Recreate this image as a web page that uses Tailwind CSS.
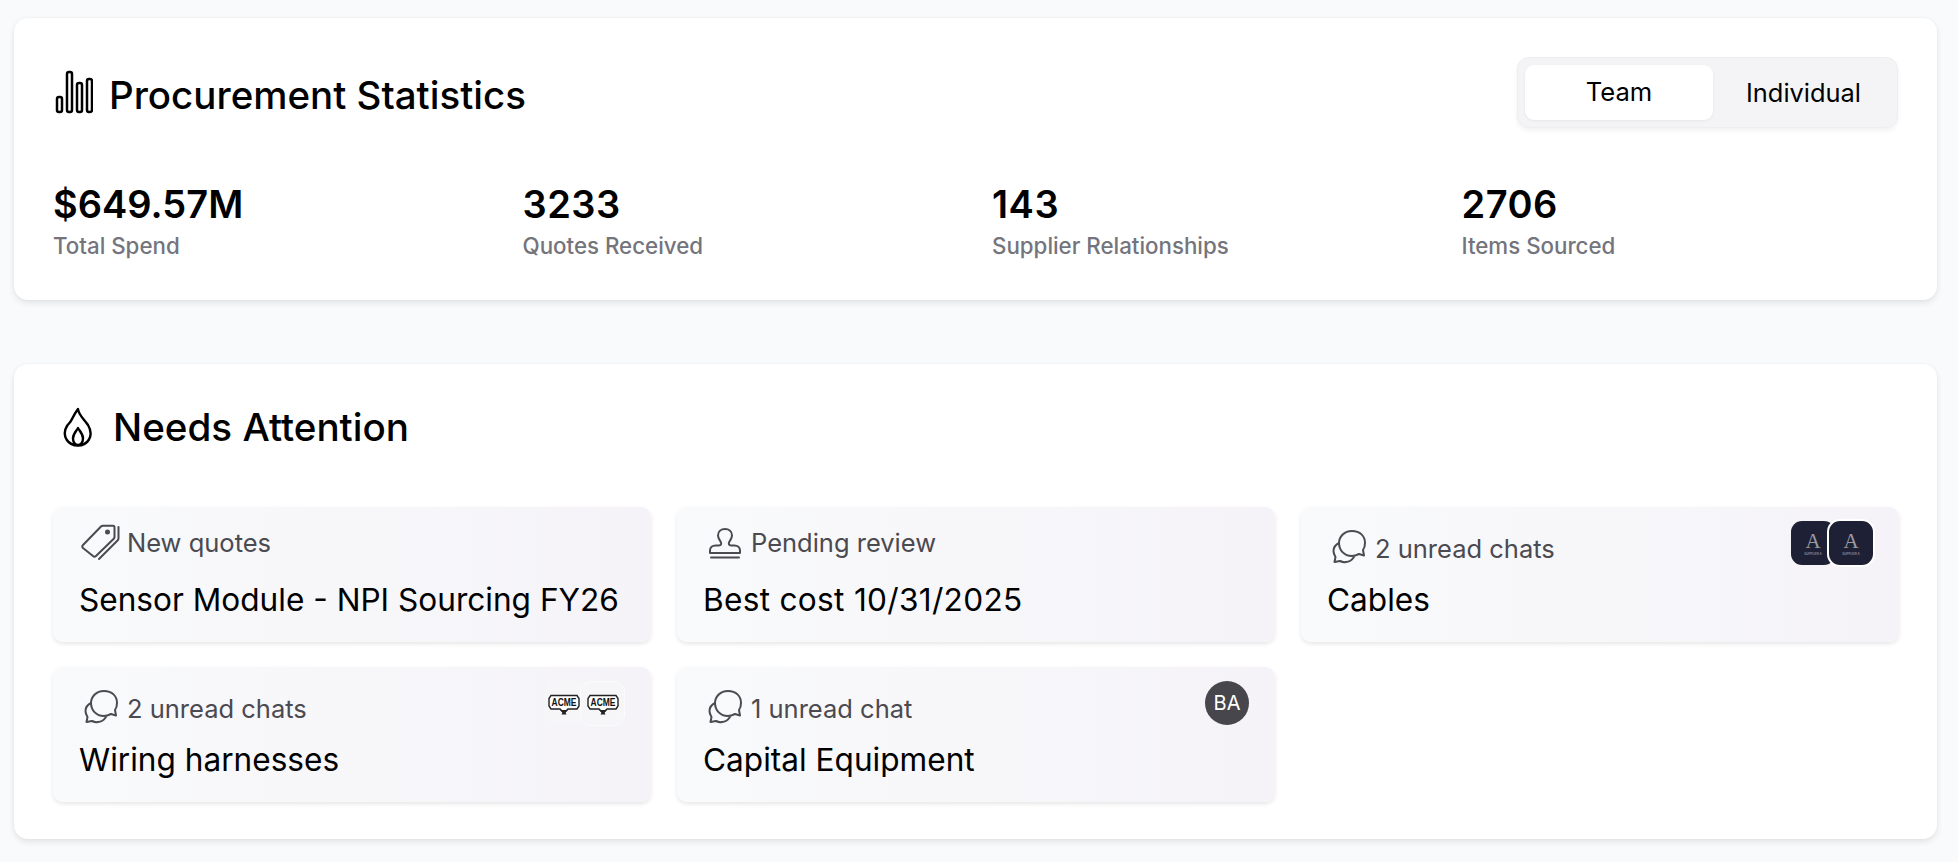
<!DOCTYPE html>
<html lang="en">
<head>
    <meta charset="UTF-8" />
    <meta name="viewport" content="width=device-width, initial-scale=1" />
    <title>Procurement Dashboard</title>
    <script src="https://cdn.jsdelivr.net/npm/@tailwindcss/browser@4"></script>
</head>
<body class="bg-[#f9fafc] font-['Inter',sans-serif] text-black h-[862px] overflow-hidden pt-[18px] pl-[14px] pr-[21px]">

    <!-- Statistics -->
    <section class="bg-white rounded-[14px] shadow-[0_3px_6px_rgba(0,0,0,0.09),0_0_3px_rgba(0,0,0,0.04)] h-[282px] pt-[39px] px-[39px]">
        <div class="flex items-center justify-between h-[71px]">
            <div class="flex items-center">
                <svg class="w-[38px] h-[44px] -mt-[1px] ml-[2px]" viewBox="0 0 38 44" fill="none" stroke="#000" stroke-width="2.5">
                    <rect x="2" y="27" width="5" height="15" rx="2" />
                    <rect x="12" y="2" width="5" height="40" rx="2" />
                    <rect x="22" y="13" width="5" height="29" rx="2" />
                    <rect x="32" y="9" width="5" height="33" rx="2" />
                </svg>
                <h1 class="ml-[16px] mt-[5px] text-[38.5px] leading-[48px] font-medium">Procurement Statistics</h1>
            </div>
            <div class="flex w-[381px] h-[71px] p-[7px] pr-0 rounded-[12px] bg-[#f4f4f7] border border-[#eeeef1] shadow-[0_3px_5px_rgba(0,0,0,0.05)]">
                <button class="w-[188px] h-[55px] rounded-[9px] bg-white text-[25.6px] shadow-[0_1px_3px_rgba(0,0,0,0.06)]">Team</button>
                <button class="flex-1 h-[57px] text-[25.4px] pr-[3px]">Individual</button>
            </div>
        </div>
        <div class="grid grid-cols-4 gap-[33px] mt-[54px]">
            <div>
                <div class="text-[38px] leading-[44px] font-semibold">$649.57M</div>
                <div class="text-[22.3px] leading-[30px] font-medium text-[#74747c] mt-[5px]">Total Spend</div>
            </div>
            <div>
                <div class="text-[38px] leading-[44px] font-semibold tracking-[0.5px]">3233</div>
                <div class="text-[22.3px] leading-[30px] font-medium text-[#74747c] mt-[5px]">Quotes Received</div>
            </div>
            <div>
                <div class="text-[38px] leading-[44px] font-semibold tracking-[0.5px]">143</div>
                <div class="text-[22.3px] leading-[30px] font-medium text-[#74747c] mt-[5px]">Supplier Relationships</div>
            </div>
            <div>
                <div class="text-[38px] leading-[44px] font-semibold tracking-[0.5px]">2706</div>
                <div class="text-[22.3px] leading-[30px] font-medium text-[#74747c] mt-[5px]">Items Sourced</div>
            </div>
        </div>
    </section>

    <!-- Needs attention -->
    <section class="bg-white rounded-[14px] shadow-[0_3px_6px_rgba(0,0,0,0.09),0_0_3px_rgba(0,0,0,0.04)] mt-[64px] h-[475px] pt-[39px] pl-[39px] pr-[38px]">
        <div class="flex items-center h-[48px]">
            <svg class="w-[30px] h-[40px] ml-[10px]" viewBox="0 0 30 40" fill="none" stroke="#000" stroke-width="2.4" stroke-linejoin="round">
                <path d="M15 2C15.5 8 21 12 25 18C28 23 28.500 28 26 32.500C23.500 36.500 19.500 38.500 15 38.500C10 38.500 6 36.500 3.500 32.500C1 28 1.500 23 4 19C5.500 16.500 7.500 15.500 9 12C10.500 9 12 6 15 2Z" />
                <path d="M15 21C17 24.500 20 27 20 31.500C20 35.500 17.500 38 15 38C12.500 38 10 35.500 10 31.500C10 27 13 24.500 15 21Z" />
            </svg>
            <h2 class="ml-[20px] text-[38.6px] leading-[48px] font-medium">Needs Attention</h2>
        </div>
        <div class="grid grid-cols-3 gap-x-[26px] gap-y-[25px] mt-[56px]">

            <div class="h-[135px] rounded-[10px] bg-linear-to-r from-[#f9fafc] to-[#f5f3f7] shadow-[0_2px_4px_rgba(0,0,0,0.1)] pt-[14px] pl-[26px] pr-[26px]">
                <div class="flex items-center h-[44px]">
                    <svg class="w-[40px] h-[38px] -mt-[3px] ml-[1px] mr-[7px] shrink-0" viewBox="0 0 40 38" fill="none" stroke="#4a4a50" stroke-width="2" stroke-linejoin="round" stroke-linecap="round">
                        <path d="M3 22L21 3.500C21.500 3 22 2.800 23 2.800H33C34 2.800 34.500 3.500 34.500 4.500V14C34.500 15 34 15.500 33.500 16L16 33C15 34 14 34 13 33L3 25C2 24 2 23 3 22Z" />
                        <circle cx="27.500" cy="9" r="1.500" fill="#4a4a50" />
                        <path d="M38.500 4V15.500C38.500 16.500 38 17 37.500 17.500L19 36" />
                    </svg>
                    <span class="text-[25.5px] text-[#4a4a50]">New quotes</span>
                </div>
                <div class="text-[31.6px] leading-[40px] mt-[15px]">Sensor Module - NPI Sourcing FY26</div>
            </div>

            <div class="h-[135px] rounded-[10px] bg-linear-to-r from-[#f9fafc] to-[#f5f3f7] shadow-[0_2px_4px_rgba(0,0,0,0.1)] pt-[14px] pl-[26px] pr-[26px]">
                <div class="flex items-center h-[44px]">
                    <svg class="w-[34px] h-[32px] ml-[5px] mr-[9px] shrink-0" viewBox="0 0 34 32" fill="none" stroke="#4a4a50" stroke-width="2" stroke-linejoin="round" stroke-linecap="round">
                        <path d="M2 26V23.500C2 20.500 4.500 18.500 7.500 18.500H11C13 18.500 13.500 17 13 15.500C12 13 10 11.500 10 8.500C10 4.500 13 2 17 2C21 2 24 4.500 24 8.500C24 11.500 22 13 21 15.500C20.500 17 21 18.500 23 18.500H26.500C29.500 18.500 32 20.500 32 23.500V26Z" />
                        <path d="M3 30.500H31" />
                    </svg>
                    <span class="text-[25.5px] text-[#4a4a50]">Pending review</span>
                </div>
                <div class="text-[31.6px] leading-[40px] mt-[15px] tracking-[0.3px]">Best cost 10/31/2025</div>
            </div>

            <div class="h-[135px] rounded-[10px] bg-linear-to-r from-[#f9fafc] to-[#f5f3f7] shadow-[0_2px_4px_rgba(0,0,0,0.1)] pt-[14px] pl-[26px] pr-[26px]">
                <div class="flex items-start justify-between h-[44px]">
                    <div class="flex items-end h-[44px]">
                        <svg class="w-[36px] h-[36px] ml-[4px] mr-[8px] shrink-0" viewBox="0 0 36 36" fill="none" stroke="#4a4a50" stroke-width="2" stroke-linejoin="round" stroke-linecap="round">
                            <path d="M21 2C13 2 8 8 8 14C8 21 13 27 21 27C24 27 26 26 28 25L33 26.500L32 21C33.500 19 34 16.500 34 14C34 7 29 2 21 2Z" />
                            <path d="M8 14C4 16 2.500 19 2.500 22C2.500 24.500 3.500 26 4.500 28L3.500 33L9 32C11 33 13 33.500 15 33C18 33 21 31 23 28" />
                        </svg>
                        <span class="text-[25.5px] leading-[33px] text-[#4a4a50]">2 unread chats</span>
                    </div>
                    <div class="flex">
                        <div class="w-[44px] h-[44px] rounded-[11px] bg-[#1e2035] -mr-[8px] flex flex-col items-center justify-center text-[#9a9aa0]">
                            <span class="font-['Liberation_Serif',serif] text-[21px] leading-[22px]">A</span>
                            <span class="text-[3px] leading-[4px] font-semibold">SUPPLIER A</span>
                        </div>
                        <div class="relative w-[48px] h-[48px] -mt-[2px] -mr-[2px] rounded-[13px] bg-[#1e2035] border-2 border-white flex flex-col items-center justify-center text-[#9a9aa0]">
                            <span class="font-['Liberation_Serif',serif] text-[21px] leading-[22px]">A</span>
                            <span class="text-[3px] leading-[4px] font-semibold">SUPPLIER A</span>
                        </div>
                    </div>
                </div>
                <div class="text-[31.6px] leading-[40px] mt-[15px]">Cables</div>
            </div>

            <div class="h-[135px] rounded-[10px] bg-linear-to-r from-[#f9fafc] to-[#f5f3f7] shadow-[0_2px_4px_rgba(0,0,0,0.1)] pt-[14px] pl-[26px] pr-[26px]">
                <div class="flex items-start justify-between h-[44px]">
                    <div class="flex items-end h-[44px]">
                        <svg class="w-[36px] h-[36px] ml-[4px] mr-[8px] shrink-0" viewBox="0 0 36 36" fill="none" stroke="#4a4a50" stroke-width="2" stroke-linejoin="round" stroke-linecap="round">
                            <path d="M21 2C13 2 8 8 8 14C8 21 13 27 21 27C24 27 26 26 28 25L33 26.500L32 21C33.500 19 34 16.500 34 14C34 7 29 2 21 2Z" />
                            <path d="M8 14C4 16 2.500 19 2.500 22C2.500 24.500 3.500 26 4.500 28L3.500 33L9 32C11 33 13 33.500 15 33C18 33 21 31 23 28" />
                        </svg>
                        <span class="text-[25.5px] leading-[33px] text-[#4a4a50]">2 unread chats</span>
                    </div>
                    <div class="flex">
                        <div class="w-[45px] h-[45px] rounded-[11px] bg-[#f6f5f8] -mr-[9px] flex items-center justify-center pr-[6px]">
                            <svg class="w-[32px] h-[22px]" viewBox="0 0 32 22">
                                <path d="M3 2.500H29L31 5.500V13L29 16H20L16 20L12 16H3L1 13V5.500Z" fill="#fff" stroke="#222" stroke-width="1.400" />
                                <path d="M12 17H20L17.500 19.500L18.500 21.500H13.500L14.500 19.500Z" fill="#222" />
                                <text x="16" y="13" text-anchor="middle" font-family="Liberation Sans, sans-serif" font-weight="700" font-size="10" textLength="25" lengthAdjust="spacingAndGlyphs" fill="#111">ACME</text>
                            </svg>
                        </div>
                        <div class="relative w-[45px] h-[45px] rounded-[11px] bg-[#f6f5f8] border border-[#fbfbfc] flex items-center justify-center">
                            <svg class="w-[32px] h-[22px]" viewBox="0 0 32 22">
                                <path d="M3 2.500H29L31 5.500V13L29 16H20L16 20L12 16H3L1 13V5.500Z" fill="#fff" stroke="#222" stroke-width="1.400" />
                                <path d="M12 17H20L17.500 19.500L18.500 21.500H13.500L14.500 19.500Z" fill="#222" />
                                <text x="16" y="13" text-anchor="middle" font-family="Liberation Sans, sans-serif" font-weight="700" font-size="10" textLength="25" lengthAdjust="spacingAndGlyphs" fill="#111">ACME</text>
                            </svg>
                        </div>
                    </div>
                </div>
                <div class="text-[31.6px] leading-[40px] mt-[15px]">Wiring harnesses</div>
            </div>

            <div class="h-[135px] rounded-[10px] bg-linear-to-r from-[#f9fafc] to-[#f5f3f7] shadow-[0_2px_4px_rgba(0,0,0,0.1)] pt-[14px] pl-[26px] pr-[26px]">
                <div class="flex items-start justify-between h-[44px]">
                    <div class="flex items-end h-[44px]">
                        <svg class="w-[36px] h-[36px] ml-[4px] mr-[8px] shrink-0" viewBox="0 0 36 36" fill="none" stroke="#4a4a50" stroke-width="2" stroke-linejoin="round" stroke-linecap="round">
                            <path d="M21 2C13 2 8 8 8 14C8 21 13 27 21 27C24 27 26 26 28 25L33 26.500L32 21C33.500 19 34 16.500 34 14C34 7 29 2 21 2Z" />
                            <path d="M8 14C4 16 2.500 19 2.500 22C2.500 24.500 3.500 26 4.500 28L3.500 33L9 32C11 33 13 33.500 15 33C18 33 21 31 23 28" />
                        </svg>
                        <span class="text-[25.5px] leading-[33px] text-[#4a4a50]">1 unread chat</span>
                    </div>
                    <div class="w-[44px] h-[44px] rounded-full bg-[#46464c] text-white text-[20px] flex items-center justify-center">BA</div>
                </div>
                <div class="text-[31.6px] leading-[40px] mt-[15px]">Capital Equipment</div>
            </div>
        </div>
    </section>
</body>
</html>
